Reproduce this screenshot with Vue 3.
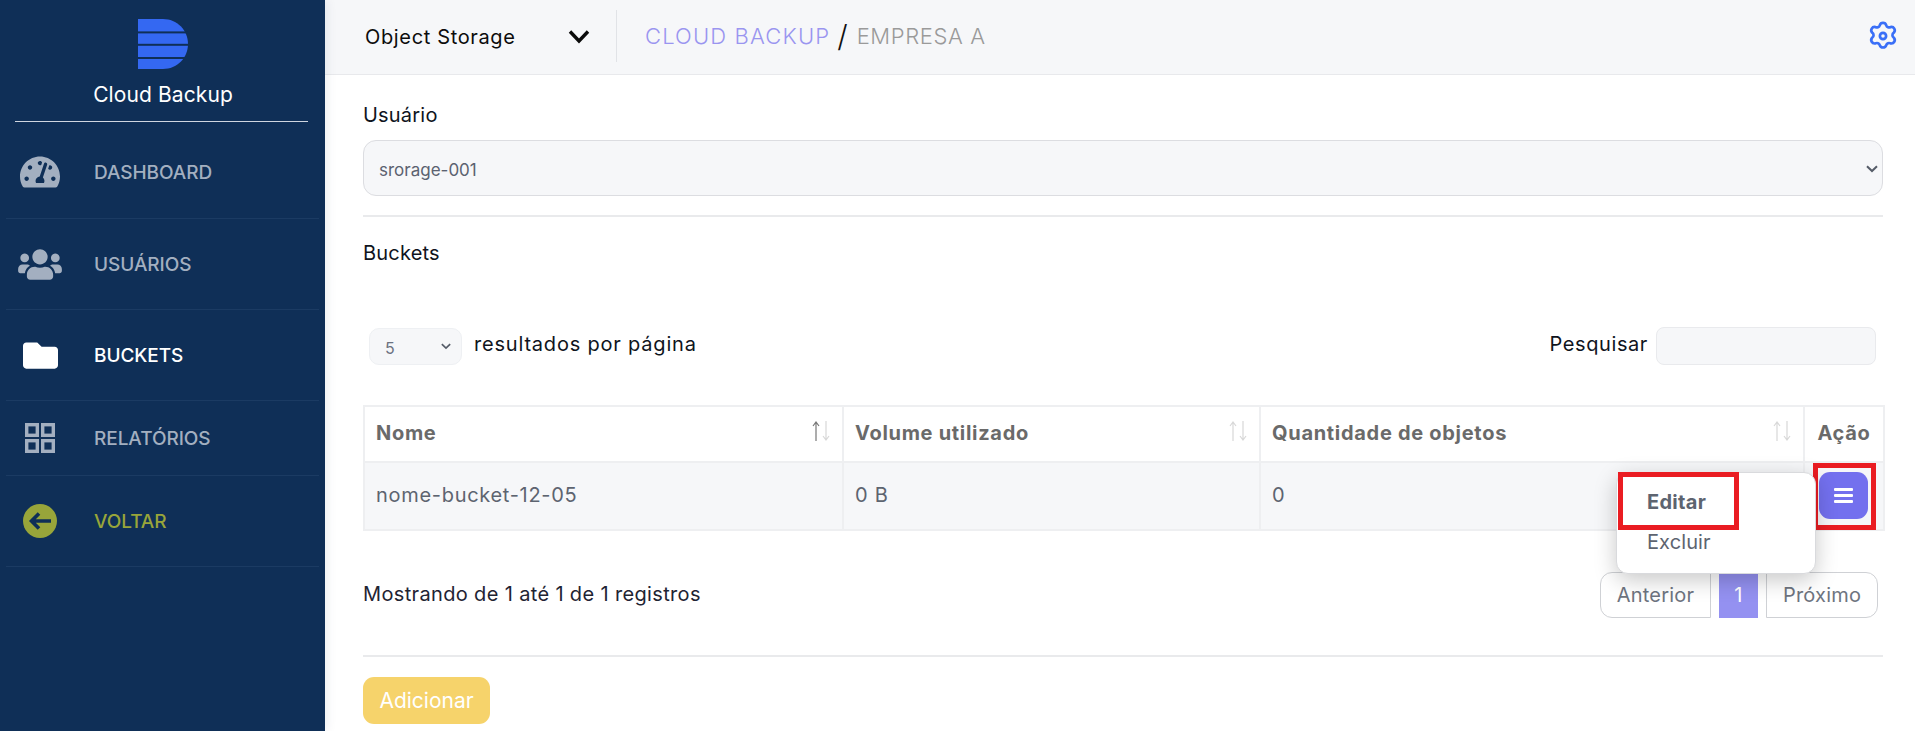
<script setup>
const nav = [
  { key: 'dash', label: 'DASHBOARD' },
  { key: 'users', label: 'USUÁRIOS' },
  { key: 'folder', label: 'BUCKETS', active: true },
  { key: 'grid', label: 'RELATÓRIOS' },
  { key: 'back', label: 'VOLTAR', back: true }
]
const heights = [97, 91, 91, 75, 91]
</script>

<template>
  <div class="app">
    <aside class="sidebar">
      <div class="brand">
        <svg class="logo" viewBox="0 0 50 50">
          <path d="M0 0H25C39 0 50 11 50 25S39 50 25 50H0Z" fill="#3468f2" />
          <rect x="0" y="12.4" width="50" height="2" fill="#0f2f57" />
          <rect x="0" y="24.8" width="50" height="2" fill="#0f2f57" />
          <rect x="0" y="38" width="50" height="2" fill="#0f2f57" />
        </svg>
        <div class="brand-name">Cloud Backup</div>
      </div>
      <nav class="nav">
        <a
          v-for="(item, i) in nav"
          :key="item.key"
          class="nav-item"
          :class="{ active: item.active, back: item.back, first: i === 0 }"
          :style="{ height: heights[i] + 'px' }"
        >
          <span class="nav-icon">
            <svg v-if="item.key === 'dash'" width="40" height="36" viewBox="0 0 576 512" fill="currentColor"><path d="M288 32C128.94 32 0 160.94 0 320c0 52.8 14.25 102.26 39.06 144.8 5.61 9.62 16.3 15.2 27.44 15.2h443c11.14 0 21.83-5.58 27.44-15.2C561.75 422.26 576 372.8 576 320c0-159.06-128.94-288-288-288zm0 64c14.71 0 26.58 10.13 30.32 23.65-1.11 2.26-2.64 4.23-3.45 6.67l-9.22 27.67c-5.13 3.49-10.97 6.01-17.64 6.01-17.67 0-32-14.33-32-32S270.33 96 288 96zM96 384c-17.67 0-32-14.33-32-32s14.33-32 32-32 32 14.33 32 32-14.33 32-32 32zm48-160c-17.67 0-32-14.33-32-32s14.33-32 32-32 32 14.33 32 32-14.33 32-32 32zm246.77-72.41l-61.33 184C343.13 347.33 352 364.54 352 384c0 11.72-3.38 22.55-8.88 32H232.88c-5.5-9.45-8.88-20.28-8.88-32 0-33.94 26.5-61.43 59.9-63.59l61.34-184.01c4.17-12.56 17.73-19.45 30.36-15.17 12.57 4.19 19.35 17.79 15.17 30.36zm14.66 57.2l15.52-46.55c3.47-1.29 7.13-2.23 11.05-2.23 17.67 0 32 14.33 32 32s-14.33 32-32 32c-11.38-.01-20.89-6.28-26.57-15.22zM480 384c-17.67 0-32-14.33-32-32s14.33-32 32-32 32 14.33 32 32-14.33 32-32 32z"/></svg>
            <svg v-else-if="item.key === 'users'" width="44" height="35" viewBox="0 0 640 512" fill="currentColor"><path d="M96 224c35.3 0 64-28.7 64-64s-28.7-64-64-64-64 28.7-64 64 28.7 64 64 64zm448 0c35.3 0 64-28.7 64-64s-28.7-64-64-64-64 28.7-64 64 28.7 64 64 64zm32 32h-64c-17.6 0-33.5 7.1-45.1 18.6 40.3 22.1 68.9 62 75.1 109.4h66c17.7 0 32-14.3 32-32v-32c0-35.3-28.7-64-64-64zm-256 0c61.9 0 112-50.1 112-112S381.9 32 320 32 208 82.1 208 144s50.1 112 112 112zm76.8 32h-8.3c-20.8 10-43.9 16-68.5 16s-47.6-6-68.5-16h-8.3C179.6 288 128 339.6 128 403.2V432c0 26.5 21.5 48 48 48h288c26.5 0 48-21.5 48-48v-28.8c0-63.6-51.6-115.2-115.2-115.2zm-223.7-13.4C161.5 263.1 145.6 256 128 256H64c-35.3 0-64 28.7-64 64v32c0 17.7 14.3 32 32 32h65.9c6.3-47.4 34.9-87.3 75.2-109.4z"/></svg>
            <svg v-else-if="item.key === 'folder'" width="35" height="35" viewBox="0 0 512 512" fill="currentColor"><path d="M464 128H272l-64-64H48C21.49 64 0 85.49 0 112v288c0 26.51 21.49 48 48 48h416c26.51 0 48-21.49 48-48V176c0-26.51-21.49-48-48-48z"/></svg>
            <svg v-else-if="item.key === 'grid'" width="30" height="30" viewBox="0 0 30 30" fill="none" stroke="currentColor" stroke-width="3.4">
              <rect x="1.7" y="1.7" width="10.6" height="10.6" />
              <rect x="17.7" y="1.7" width="10.6" height="10.6" />
              <rect x="1.7" y="17.7" width="10.6" height="10.6" />
              <rect x="17.7" y="17.7" width="10.6" height="10.6" />
            </svg>
            <svg v-else width="34" height="34" viewBox="0 0 34 34">
              <circle cx="17" cy="17" r="17" fill="currentColor" />
              <path d="M28 17H9M16 9.5 8.5 17 16 24.5" fill="none" stroke="#0f2f57" stroke-width="3.6" />
            </svg>
          </span>
          <span class="nav-label">{{ item.label }}</span>
        </a>
      </nav>
    </aside>

    <div class="main">
      <header class="topbar">
        <div class="service">
          <span>Object Storage</span>
          <svg width="22" height="15" viewBox="0 0 22 15" fill="none" stroke="#0b0b0b" stroke-width="3.4"><path d="M2 2.5 11 12 20 2.5" /></svg>
        </div>
        <div class="crumbs">
          <span class="crumb-a">CLOUD BACKUP</span>
          <span class="crumb-sep">/</span>
          <span class="crumb-b">EMPRESA A</span>
        </div>
        <svg class="gear" width="34" height="34" viewBox="0 0 24 24" fill="none" stroke="#3a6ff7" stroke-width="1.9" stroke-linejoin="round">
          <path d="M9.7 3.3a2.4 2.4 0 0 1 4.6 0 2.1 2.1 0 0 0 3 1.2 2.4 2.4 0 0 1 2.3 4 2.1 2.1 0 0 0 0 3.5 2.4 2.4 0 0 1-2.3 4 2.1 2.1 0 0 0-3 1.2 2.4 2.4 0 0 1-4.6 0 2.1 2.1 0 0 0-3-1.2 2.4 2.4 0 0 1-2.3-4 2.1 2.1 0 0 0 0-3.5 2.4 2.4 0 0 1 2.3-4 2.1 2.1 0 0 0 3-1.2Z" transform="translate(0 1.2)" />
          <circle cx="12" cy="12" r="2.2" />
        </svg>
      </header>

      <main class="content">
        <label class="field-label">Usuário</label>
        <div class="select-wrap big">
          <select class="select"><option>srorage-001</option></select>
          <svg class="select-chev" width="12" height="8" viewBox="0 0 12 8" fill="none" stroke="#555c68" stroke-width="2"><path d="M1 1.2 6 6l5-4.8" /></svg>
        </div>
        <hr class="rule first" />
        <div class="section-title">Buckets</div>

        <div class="toolbar">
          <div class="length">
            <div class="select-wrap small">
              <select class="select"><option>5</option></select>
              <svg class="select-chev" width="10" height="7" viewBox="0 0 12 8" fill="none" stroke="#555c68" stroke-width="2"><path d="M1 1.2 6 6l5-4.8" /></svg>
            </div>
            <span>resultados por página</span>
          </div>
          <div class="search">
            <span>Pesquisar</span>
            <input class="search-input" type="text" />
          </div>
        </div>

        <table class="table">
          <colgroup>
            <col style="width: 479px" />
            <col style="width: 417px" />
            <col style="width: 544px" />
            <col style="width: 80px" />
          </colgroup>
          <thead>
            <tr>
              <th>
                <span class="th-in">Nome
                  <svg class="sort" width="20" height="20" viewBox="0 0 20 20" fill="none" stroke-width="1.2">
                    <path d="M5 20V1M2 5l3-4 3 4" stroke="#777" />
                    <path d="M15 0v19M12 15l3 4 3-4" stroke="#d8d8d8" />
                  </svg>
                </span>
              </th>
              <th>
                <span class="th-in">Volume utilizado
                  <svg class="sort" width="20" height="20" viewBox="0 0 20 20" fill="none" stroke="#d8d8d8" stroke-width="1.2">
                    <path d="M5 20V1M2 5l3-4 3 4" />
                    <path d="M15 0v19M12 15l3 4 3-4" />
                  </svg>
                </span>
              </th>
              <th>
                <span class="th-in">Quantidade de objetos
                  <svg class="sort" width="20" height="20" viewBox="0 0 20 20" fill="none" stroke="#d8d8d8" stroke-width="1.2">
                    <path d="M5 20V1M2 5l3-4 3 4" />
                    <path d="M15 0v19M12 15l3 4 3-4" />
                  </svg>
                </span>
              </th>
              <th class="center">Ação</th>
            </tr>
          </thead>
          <tbody>
            <tr>
              <td>nome-bucket-12-05</td>
              <td>0 B</td>
              <td>0</td>
              <td class="action">
                <button class="menu-btn" type="button" aria-label="Ações">
                  <svg width="19" height="15" viewBox="0 0 19 15" fill="#fff"><rect width="19" height="3" rx="1" /><rect y="6" width="19" height="3" rx="1" /><rect y="12" width="19" height="3" rx="1" /></svg>
                </button>
                <span class="mark mark-btn"></span>
                <div class="menu">
                  <a class="menu-item strong">Editar</a>
                  <a class="menu-item">Excluir</a>
                  <span class="mark mark-edit"></span>
                </div>
              </td>
            </tr>
          </tbody>
        </table>

        <div class="table-foot">
          <span class="info">Mostrando de 1 até 1 de 1 registros</span>
          <div class="pager">
            <a class="page-btn prev">Anterior</a>
            <a class="page-num">1</a>
            <a class="page-btn next">Próximo</a>
          </div>
        </div>
        <hr class="rule second" />
        <button class="add" type="button">Adicionar</button>
      </main>
    </div>
  </div>
</template>

<style>
html, body { margin: 0; overflow: hidden; background: #fff; }
</style>

<style scoped>
* { box-sizing: border-box; }
.app {
  display: flex;
  width: 1915px;
  height: 731px;
  overflow: hidden;
  font-family: Inter, "Liberation Sans", sans-serif;
  font-size: 18px;
  color: #111827;
}
.sidebar {
  width: 325px;
  flex: none;
  background: #0f2f57;
  box-shadow: 2px 0 10px rgba(15, 47, 87, .08);
  z-index: 1;
}
.brand {
  height: 122px;
  margin: 0 17px 0 15px;
  padding: 19px 0 0 3px;
  border-bottom: 1px solid #cfd6e0;
  display: flex;
  flex-direction: column;
  align-items: center;
}
.logo { width: 50px; height: 50px; }
.brand-name { margin-top: 13px; color: #fff; font-size: 21px; letter-spacing: .1px; line-height: 25px; white-space: nowrap; }
.nav { margin: 0 6px; }
.nav-item {
  display: flex;
  align-items: center;
  border-bottom: 1px solid #1b3b63;
  color: #a3afc0;
  font-size: 19px;
  font-weight: 500;
}
.nav-item.first { padding-top: 4px; }
.nav-item.active { color: #fff; }
.nav-item.back { color: #98a53a; }
.nav-icon { width: 88px; display: flex; justify-content: center; padding-right: 20px; flex: none; }
.nav-label { letter-spacing: -.05px; }
.topbar {
  height: 75px;
  flex: none;
  background: #f6f7f9;
  border-bottom: 1px solid #e8e9ec;
  display: flex;
  align-items: center;
  padding: 0 15px 2px 40px;
}
.main { flex: 1; display: flex; flex-direction: column; min-width: 0; }
.service {
  width: 252px;
  height: 52px;
  padding-right: 26px;
  border-right: 1px solid #e1e3e7;
  display: flex;
  align-items: center;
  justify-content: space-between;
  font-size: 20px;
  letter-spacing: .65px;
  color: #0c0c0c;
}
.service span { padding-top: 2px; }
.crumbs { margin-left: 28px; display: flex; align-items: center; font-size: 22px; font-weight: 300; }
.crumb-a { color: #9a95f0; letter-spacing: 1.15px; }
.crumb-sep { color: #111; font-size: 30px; margin: 0 7px; }
.crumb-b { color: #9a9a9a; letter-spacing: .6px; margin-left: 2px; }
.gear { margin-left: auto; }
.content { padding: 0 32px 0 38px; }
.field-label { display: block; margin-top: 26px; font-size: 20px; letter-spacing: .2px; line-height: 28px; color: #0f1420; }
.select-wrap { position: relative; }
.select {
  width: 100%;
  height: 100%;
  appearance: none;
  background: #f6f7f9;
  font: inherit;
  color: #5b6270;
  outline: none;
}
.select-chev { position: absolute; top: 50%; right: 5px; margin-top: -3px; pointer-events: none; }
.select-wrap.big { height: 56px; margin-top: 11px; }
.big .select { border: 1px solid #dcdde1; border-radius: 13px; padding: 3px 15px 0; font-size: 17px; }
.small { width: 93px; height: 37px; margin-left: 6px; }
.small .select { border: 1px solid #eef0f3; border-radius: 10px; padding: 3px 15px 0; font-size: 16px; color: #6b7280; }
.small .select-chev { right: 11px; }
.rule { border: 0; border-top: 2px solid #e9eaec; margin: 0; }
.rule.first { margin-top: 19px; }
.section-title { margin-top: 22px; font-size: 20px; letter-spacing: .2px; line-height: 28px; color: #0f1420; }
.toolbar { display: flex; justify-content: space-between; align-items: center; margin-top: 60px; height: 38px; padding-right: 7px; }
.length { display: flex; align-items: center; gap: 12px; color: #0f1420; }
.length span { margin-top: -5px; font-size: 20px; letter-spacing: .8px; }
.search { display: flex; align-items: center; gap: 8px; color: #0f1420; font-size: 20px; letter-spacing: .6px; }
.search span { margin-top: -5px; }
.search-input { width: 220px; height: 38px; background: #f6f7f9; border: 1px solid #e9eaed; border-radius: 8px; outline: none; }
.table {
  width: 1520px;
  margin-top: 40px;
  border-collapse: collapse;
  table-layout: fixed;
  font-size: 20px;
  letter-spacing: .7px;
}
.table th, .table td { border: 2px solid #eeeff1; padding: 0 12px 0 11px; text-align: left; }
.table th { height: 56px; padding-bottom: 2px; color: #6a6a6a; font-weight: 700; font-size: 20px; white-space: nowrap; }
.table th.center { padding: 0 0 2px; text-align: center; }
.table td { height: 68px; padding-bottom: 2px; background: #f6f7f9; color: #5d6470; }
.th-in { display: flex; align-items: center; justify-content: space-between; }
.sort { margin-right: -1px; margin-top: -5px; flex: none; }
.action { position: relative; }
.menu-btn {
  position: absolute;
  left: 14px;
  top: 9px;
  width: 49px;
  height: 47px;
  padding: 0;
  border: 0;
  border-radius: 11px;
  background: #7370ee;
  display: flex;
  align-items: center;
  justify-content: center;
}
.mark { position: absolute; border: 5px solid #ea1c22; pointer-events: none; }
.mark-btn { left: 8px; top: 0; width: 63px; height: 67px; }
.menu {
  position: absolute;
  right: 67px;
  top: 9px;
  width: 200px;
  height: 102px;
  padding-top: 9px;
  background: #fff;
  border: 1px solid #d9dadd;
  border-radius: 12px;
  box-shadow: 0 6px 22px rgba(0, 0, 0, .22);
  z-index: 3;
}
.menu-item { display: block; padding-left: 30px; height: 40px; line-height: 40px; color: #5d6470; font-size: 20px; letter-spacing: .1px; }
.menu-item.strong { font-weight: 700; letter-spacing: .3px; }
.mark-edit { left: 1px; top: -1px; width: 121px; height: 58px; }
.table-foot { display: flex; justify-content: space-between; align-items: center; margin-top: 41px; height: 46px; padding-right: 5px; }
.info { margin-top: -2px; font-size: 20px; letter-spacing: .35px; color: #1f2433; }
.pager { display: flex; align-items: stretch; height: 46px; font-size: 20px; letter-spacing: .2px; color: #6e7480; }
.page-btn { display: flex; align-items: center; justify-content: center; background: #fff; border: 1px solid #cfd1d5; }
.prev { width: 111px; border-radius: 12px 0 0 12px; }
.next { width: 112px; border-radius: 0 12px 12px 0; }
.page-num { width: 39px; margin: 0 8px; display: flex; align-items: center; justify-content: center; background: #9491f1; color: #fff; }
.rule.second { margin-top: 37px; }
.add {
  display: block;
  margin-top: 20px;
  width: 127px;
  height: 47px;
  border: 0;
  border-radius: 11px;
  background: #f6d36b;
  color: #fff;
  font: inherit;
  font-size: 21px;
}
</style>
